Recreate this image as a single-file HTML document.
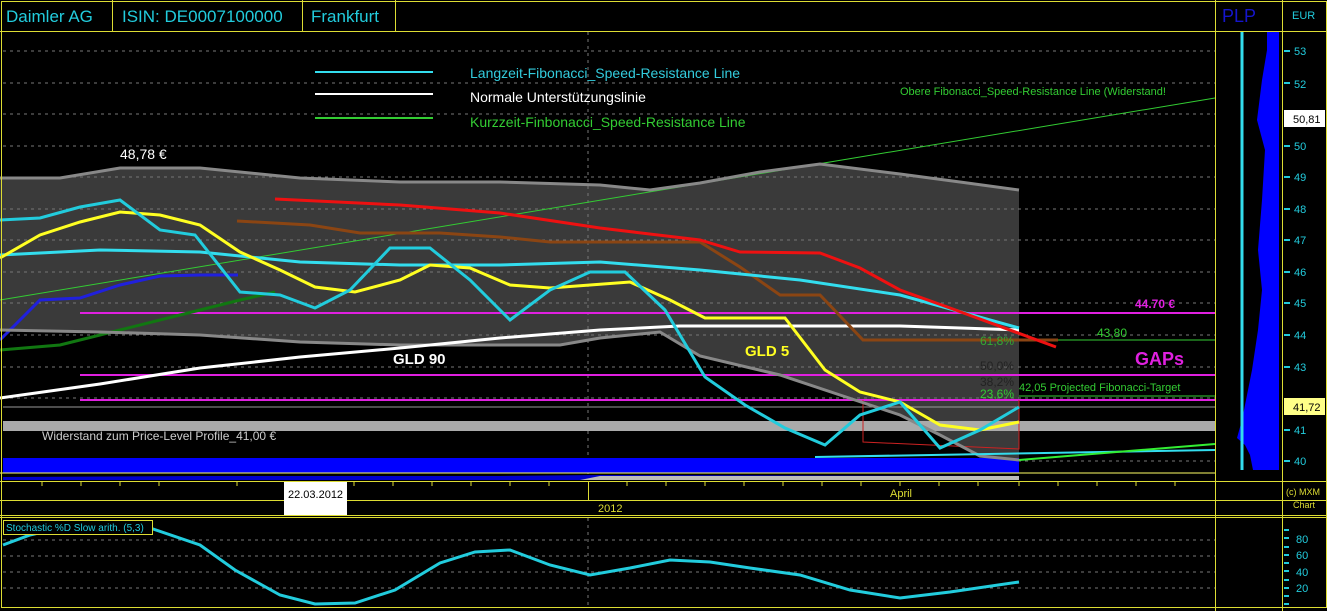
<!DOCTYPE html>
<html><head><meta charset="utf-8"><style>
body{margin:0;background:#000;width:1327px;height:611px;overflow:hidden;font-family:"Liberation Sans",sans-serif}
svg{display:block}
</style></head><body>
<svg width="1327" height="611" xmlns="http://www.w3.org/2000/svg" font-family="Liberation Sans, sans-serif">
<rect width="1327" height="611" fill="#000"/>
<!-- grey band fill -->
<polygon fill="#3a3a3a" points="0,178 60,178 120,168 200,168 300,178 400,182 500,182 600,185 650,190 700,183 760,172 820,164 900,174 960,182 1019,190 1019,460 980,456 940,435 900,415 840,395 780,375 700,356 660,332 600,338 560,345 400,345 300,342 200,335 100,332 0,330"/>
<!-- dashed grid -->
<g stroke="#777" stroke-dasharray="3,4" stroke-width="1">
<line x1="3" y1="51" x2="1215" y2="51"/><line x1="3" y1="83" x2="1215" y2="83"/><line x1="3" y1="114" x2="1215" y2="114"/><line x1="3" y1="146" x2="1215" y2="146"/><line x1="3" y1="177" x2="1215" y2="177"/><line x1="3" y1="209" x2="1215" y2="209"/><line x1="3" y1="240" x2="1215" y2="240"/><line x1="3" y1="272" x2="1215" y2="272"/><line x1="3" y1="303" x2="1215" y2="303"/><line x1="3" y1="335" x2="1215" y2="335"/><line x1="3" y1="367" x2="1215" y2="367"/><line x1="3" y1="398" x2="1215" y2="398"/><line x1="3" y1="430" x2="1215" y2="430"/><line x1="3" y1="461" x2="1215" y2="461"/>
<line x1="588" y1="32" x2="588" y2="480"/><line x1="588" y1="518" x2="588" y2="607"/>
<line x1="3" y1="540" x2="1215" y2="540"/><line x1="3" y1="572" x2="1215" y2="572"/><line x1="3" y1="556" x2="1215" y2="556"/><line x1="3" y1="588" x2="1215" y2="588"/>
</g>
<!-- horizontal levels -->
<rect x="3" y="421" width="1212" height="10" fill="#aaa"/>
<line x1="3" y1="407" x2="1215" y2="407" stroke="#999"/>
<line x1="80" y1="313" x2="1215" y2="313" stroke="#e020e0" stroke-width="2"/>
<line x1="80" y1="375" x2="1215" y2="375" stroke="#e020e0" stroke-width="2"/>
<line x1="80" y1="400" x2="1215" y2="400" stroke="#e020e0" stroke-width="2"/>
<line x1="1019" y1="340" x2="1215" y2="340" stroke="#33cc33"/>
<line x1="1019" y1="396" x2="1215" y2="396" stroke="#33cc33"/>
<rect x="3" y="458" width="1016" height="15" fill="#0000ff"/>
<polyline fill="none" stroke="#cc2222" stroke-width="1" points="863,400 863,442 1019,449 1019,400"/>
<!-- lines -->
<line x1="0" y1="300" x2="1215" y2="98" stroke="#33cc33"/>
<polyline fill="none" stroke="#2020dd" stroke-width="3" points="0,340 40,300 80,298 120,285 160,276 200,275 238,275"/>
<polyline fill="none" stroke="#117711" stroke-width="3" points="0,350 60,345 120,330 180,315 240,300 275,292"/>
<polyline fill="none" stroke="#888" stroke-width="3" points="0,178 60,178 120,168 200,168 300,178 400,182 500,182 600,185 650,190 700,183 760,172 820,164 900,174 960,182 1019,190"/>
<polyline fill="none" stroke="#888" stroke-width="3" points="0,330 100,332 200,335 300,342 400,345 560,345 600,338 660,332 700,356 780,375 840,395 900,415 940,435 980,456 1019,460"/>
<polyline fill="none" stroke="#fff" stroke-width="3" points="0,398 100,384 200,368 300,357 400,348 500,338 600,330 680,326 900,326 1019,330"/>
<polyline fill="none" stroke="#8b4513" stroke-width="3" points="237,221 310,225 360,233 440,233 500,237 550,242 700,242 740,267 780,295 820,295 863,340 1058,340"/>
<polyline fill="none" stroke="#33ddee" stroke-width="3" points="0,255 100,250 200,252 300,262 400,265 500,265 600,262 700,270 800,280 900,295 1019,328"/>
<polyline fill="none" stroke="#ee1111" stroke-width="3" points="275,199 400,205 500,213 600,228 700,240 740,252 820,253 860,268 900,290 950,308 1056,347"/>
<polyline fill="none" stroke="#ffff22" stroke-width="3" points="0,258 40,235 80,222 120,212 160,215 200,225 240,252 280,270 315,287 355,292 400,280 430,265 470,268 510,285 550,288 590,285 630,282 670,300 705,318 785,318 825,370 860,392 900,402 940,425 980,430 1019,422"/>
<polyline fill="none" stroke="#22ccdd" stroke-width="3" points="0,220 40,218 80,207 120,200 160,230 195,235 240,292 280,295 315,308 350,290 390,248 430,248 470,280 510,320 550,290 590,272 625,272 665,310 705,377 745,405 785,428 825,445 860,415 900,402 940,448 980,430 1019,407"/>
<line x1="815" y1="457" x2="1215" y2="450" stroke="#33ddee" stroke-width="2"/>
<line x1="1019" y1="460" x2="1215" y2="444" stroke="#33ee33" stroke-width="2"/>
<!-- legend -->
<line x1="315" y1="72" x2="433" y2="72" stroke="#33ddee" stroke-width="2"/>
<line x1="315" y1="94" x2="433" y2="94" stroke="#fff" stroke-width="2"/>
<line x1="315" y1="118" x2="433" y2="118" stroke="#33cc33" stroke-width="2"/>
<text x="470" y="78" fill="#33ccdd" font-size="14">Langzeit-Fibonacci_Speed-Resistance Line</text>
<text x="470" y="102" fill="#fff" font-size="14">Normale Unterstützungslinie</text>
<text x="470" y="127" fill="#33cc33" font-size="14">Kurzzeit-Finbonacci_Speed-Resistance Line</text>
<text x="120" y="159" fill="#fff" font-size="14">48,78 €</text>
<text x="900" y="95" fill="#33cc33" font-size="11">Obere Fibonacci_Speed-Resistance Line (Widerstand!</text>
<text x="1135" y="308" fill="#e020e0" font-size="12" font-weight="bold">44.70 €</text>
<text x="1097" y="337" fill="#33cc33" font-size="12">43,80</text>
<text x="1135" y="365" fill="#e020e0" font-size="18" font-weight="bold">GAPs</text>
<text x="980" y="345" fill="#33aa33" font-size="12">61,8%</text>
<text x="980" y="370" fill="#222" font-size="12">50,0%</text>
<text x="980" y="386" fill="#222" font-size="12">38,2%</text>
<text x="980" y="398" fill="#33cc33" font-size="12">23,6%</text>
<text x="1019" y="391" fill="#33cc33" font-size="11">42,05   Projected Fibonacci-Target</text>
<text x="393" y="364" fill="#fff" font-size="15" font-weight="bold">GLD 90</text>
<text x="745" y="356" fill="#ffff22" font-size="15" font-weight="bold">GLD 5</text>
<text x="42" y="440" fill="#ccc" font-size="12">Widerstand zum Price-Level Profile_41,00 €</text>
<!-- volume strip -->
<rect x="3" y="474" width="1212" height="6" fill="#000"/>
<polygon fill="#0000cc" points="3,480 3,477 200,476 500,476 600,475 1019,476 1019,480"/>
<polygon fill="#bbb" points="580,480 600,476 1019,476 1019,480"/>
<line x1="0" y1="473" x2="1215" y2="473" stroke="#ffff66"/>
<!-- PLP -->
<polygon fill="#0000ff" points="1267,32 1279,32 1279,470 1253,470 1250,455 1245,445 1237,438 1242,420 1247,395 1252,370 1258,330 1262,290 1258,250 1262,200 1265,150 1257,120 1262,80 1267,50"/>
<line x1="1242" y1="32" x2="1242" y2="470" stroke="#33ddee" stroke-width="3"/>
<!-- frames -->
<g stroke="#dddd33" fill="none" stroke-width="1">
<rect x="1.5" y="1.5" width="1325" height="606"/>
<line x1="0" y1="31.5" x2="1327" y2="31.5"/>
<line x1="112.5" y1="0" x2="112.5" y2="31"/><line x1="302.5" y1="0" x2="302.5" y2="31"/><line x1="395.5" y1="0" x2="395.5" y2="31"/>
<line x1="1215.5" y1="0" x2="1215.5" y2="611"/><line x1="1282.5" y1="0" x2="1282.5" y2="611"/>
<line x1="0" y1="481.5" x2="1327" y2="481.5"/>
<line x1="0" y1="500.5" x2="1327" y2="500.5"/>
<line x1="0" y1="515.5" x2="1327" y2="515.5"/>
<line x1="0" y1="517.5" x2="1327" y2="517.5"/>
<line x1="588.5" y1="482" x2="588.5" y2="500"/>
</g>
<g stroke="#dddd33">
<line x1="42" y1="482" x2="42" y2="486"/><line x1="81" y1="482" x2="81" y2="486"/><line x1="120" y1="482" x2="120" y2="486"/><line x1="159" y1="482" x2="159" y2="486"/><line x1="237" y1="482" x2="237" y2="486"/><line x1="354" y1="482" x2="354" y2="486"/><line x1="393" y1="482" x2="393" y2="486"/><line x1="432" y1="482" x2="432" y2="486"/><line x1="471" y1="482" x2="471" y2="486"/><line x1="510" y1="482" x2="510" y2="486"/><line x1="549" y1="482" x2="549" y2="486"/><line x1="627" y1="482" x2="627" y2="486"/><line x1="666" y1="482" x2="666" y2="486"/><line x1="705" y1="482" x2="705" y2="486"/><line x1="744" y1="482" x2="744" y2="486"/><line x1="783" y1="482" x2="783" y2="486"/><line x1="822" y1="482" x2="822" y2="486"/><line x1="861" y1="482" x2="861" y2="486"/><line x1="900" y1="482" x2="900" y2="486"/><line x1="939" y1="482" x2="939" y2="486"/><line x1="978" y1="482" x2="978" y2="486"/><line x1="1019" y1="482" x2="1019" y2="486"/><line x1="1058" y1="482" x2="1058" y2="486"/><line x1="1097" y1="482" x2="1097" y2="486"/><line x1="1136" y1="482" x2="1136" y2="486"/><line x1="1175" y1="482" x2="1175" y2="486"/>
</g>
<rect x="284" y="482" width="63" height="33" fill="#fff"/>
<text x="288" y="498" fill="#000" font-size="11">22.03.2012</text>
<text x="598" y="512" fill="#dddd33" font-size="11">2012</text>
<text x="890" y="497" fill="#dddd33" font-size="11">April</text>
<!-- header text -->
<text x="6" y="22" fill="#22ccdd" font-size="17">Daimler AG</text>
<text x="122" y="22" fill="#22ccdd" font-size="17">ISIN: DE0007100000</text>
<text x="311" y="22" fill="#22ccdd" font-size="17">Frankfurt</text>
<text x="1222" y="22" fill="#1515cc" font-size="18">PLP</text>
<text x="1292" y="19" fill="#22ccdd" font-size="11">EUR</text>
<!-- axis -->
<g fill="#22ccdd" font-size="11">
<text x="1294" y="55">53</text><text x="1294" y="88">52</text><text x="1294" y="150">50</text><text x="1294" y="181">49</text><text x="1294" y="213">48</text><text x="1294" y="244">47</text><text x="1294" y="276">46</text><text x="1294" y="307">45</text><text x="1294" y="339">44</text><text x="1294" y="371">43</text><text x="1294" y="434">41</text><text x="1294" y="465">40</text>
<text x="1296" y="543">80</text><text x="1296" y="559">60</text><text x="1296" y="576">40</text><text x="1296" y="592">20</text>
</g>
<g stroke="#22ccdd" stroke-width="2">
<line x1="1284" y1="51" x2="1290" y2="51"/><line x1="1284" y1="83" x2="1290" y2="83"/><line x1="1284" y1="146" x2="1290" y2="146"/><line x1="1284" y1="177" x2="1290" y2="177"/><line x1="1284" y1="209" x2="1290" y2="209"/><line x1="1284" y1="240" x2="1290" y2="240"/><line x1="1284" y1="272" x2="1290" y2="272"/><line x1="1284" y1="303" x2="1290" y2="303"/><line x1="1284" y1="335" x2="1290" y2="335"/><line x1="1284" y1="367" x2="1290" y2="367"/><line x1="1284" y1="430" x2="1290" y2="430"/><line x1="1284" y1="461" x2="1290" y2="461"/>
<line x1="1284" y1="530" x2="1289" y2="530"/><line x1="1284" y1="538" x2="1289" y2="538"/><line x1="1284" y1="547" x2="1289" y2="547"/><line x1="1284" y1="555" x2="1289" y2="555"/><line x1="1284" y1="563" x2="1289" y2="563"/><line x1="1284" y1="571" x2="1289" y2="571"/><line x1="1284" y1="580" x2="1289" y2="580"/><line x1="1284" y1="588" x2="1289" y2="588"/><line x1="1284" y1="596" x2="1289" y2="596"/><line x1="1284" y1="604" x2="1289" y2="604"/>
</g>
<rect x="1284" y="110" width="41" height="17" fill="#fff"/>
<text x="1293" y="123" fill="#000" font-size="11">50,81</text>
<rect x="1284" y="398" width="41" height="17" fill="#ffff88"/>
<text x="1293" y="411" fill="#000" font-size="11">41,72</text>
<text x="1286" y="495" fill="#dddd33" font-size="9">(c) MXM</text>
<text x="1293" y="508" fill="#dddd33" font-size="9">Chart</text>
<!-- stochastic -->
<polyline fill="none" stroke="#22ccdd" stroke-width="3" points="3,545 30,535 60,528 100,525 150,528 200,545 235,570 280,595 315,604 355,603 395,590 440,563 475,552 510,550 550,565 590,575 630,568 670,560 710,562 750,568 800,575 850,590 900,598 950,592 1019,582"/>
<rect x="3.5" y="520.5" width="149" height="14" fill="#000" stroke="#dddd33"/>
<text x="6" y="531" fill="#22ccdd" font-size="10">Stochastic %D Slow arith. (5,3)</text>
</svg>
</body></html>
